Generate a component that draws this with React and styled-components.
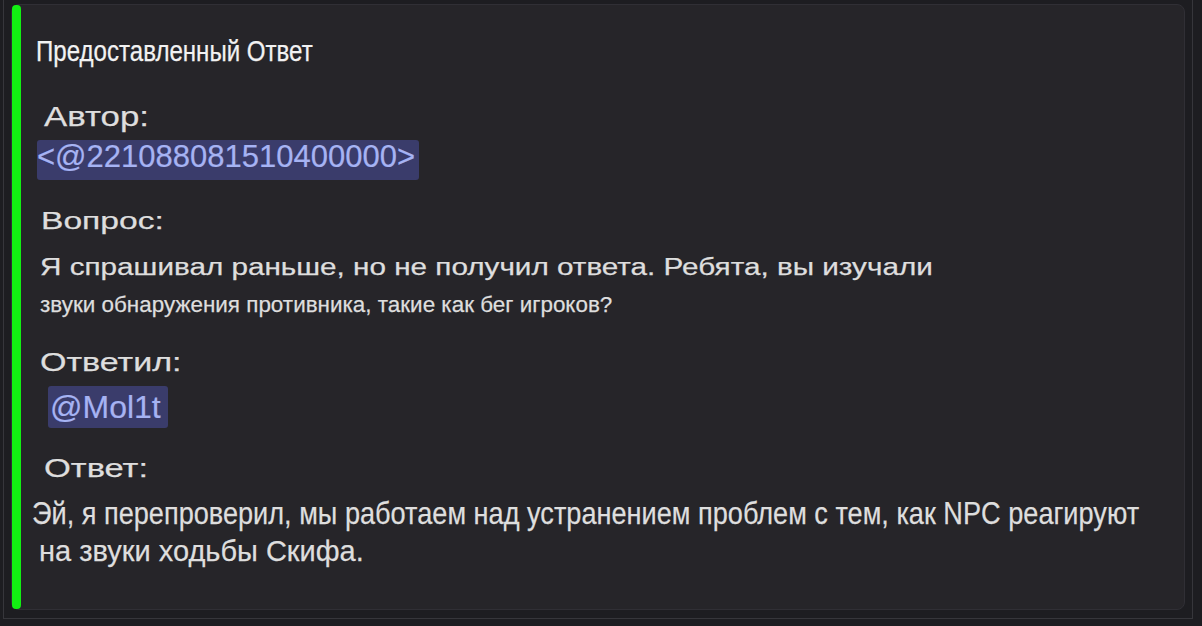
import React from "react";
import styled, { createGlobalStyle } from "styled-components";

const Global = createGlobalStyle`
  * { box-sizing: border-box; }
  html, body { margin: 0; padding: 0; background: #1d1d21; }
  body { font-family: "Liberation Sans", Arial, sans-serif; }
`;

const Page = styled.div`
  width: 1202px;
  height: 626px;
  padding: 0 9px 7px 3px;
  background: #1d1d21;
  overflow: hidden;
`;

const Frame = styled.div`
  height: 100%;
  border: 1px solid #36363b;
  border-top: 0;
  padding: 4px 7px 8px 7px;
`;

const Card = styled.div`
  display: flex;
  height: 606px;
  background: #262529;
  border: 1px solid #302f35;
  border-radius: 8px;
`;

const GreenBar = styled.div`
  flex: 0 0 9px;
  background: #12f012;
  border-radius: 4px;
`;

const Content = styled.div`
  flex: 1;
  padding-top: 29px;
  color: #dedede;
`;

const Line = styled.div`
  font-size: ${(p) => p.$size}px;
  line-height: ${(p) => p.$lh}px;
  height: ${(p) => p.$lh}px;
  margin-top: ${(p) => p.$mt || 0}px;
  margin-left: ${(p) => p.$indent}px;
  color: ${(p) => p.$color || "#dedede"};
  white-space: nowrap;
  -webkit-text-stroke: 0.25px currentColor;
  transform: scaleX(${(p) => p.$scale || 1});
  transform-origin: left center;
`;

const MentionRow = styled.div`
  margin-top: ${(p) => p.$mt}px;
  margin-left: ${(p) => p.$indent}px;
  height: ${(p) => p.$h}px;
`;

const Mention = styled.span`
  display: inline-block;
  font-size: ${(p) => p.$size}px;
  line-height: ${(p) => p.$lh}px;
  padding: ${(p) => p.$pad};
  color: #a6b3f3;
  background: #3a3c6b;
  border-radius: 3px;
  white-space: nowrap;
  -webkit-text-stroke: 0.2px currentColor;
`;

export default function App() {
  return (
    <>
      <Global />
      <Page>
        <Frame>
          <Card>
            <GreenBar />
            <Content>
              <Line $size={29} $lh={34} $indent={15} $scale={0.83} $color="#f2f2f2">
                Предоставленный Ответ
              </Line>
              <Line $size={27} $lh={32} $mt={33} $indent={23} $scale={1.29}>
                Автор:
              </Line>
              <MentionRow $mt={7} $indent={16} $h={40}>
                <Mention $size={31} $lh={34} $pad="0 4px 6px 0">
                  {"<@221088081510400000>"}
                </Mention>
              </MentionRow>
              <Line $size={24} $lh={29} $mt={26} $indent={20} $scale={1.4}>
                Вопрос:
              </Line>
              <Line $size={23} $lh={28} $mt={18} $indent={19} $scale={1.29}>
                Я спрашивал раньше, но не получил ответа. Ребята, вы изучали
              </Line>
              <Line $size={22} $lh={26} $mt={11} $indent={19} $scale={1.02}>
                звуки обнаружения противника, такие как бег игроков?
              </Line>
              <Line $size={26} $lh={31} $mt={29} $indent={19} $scale={1.31}>
                Ответил:
              </Line>
              <MentionRow $mt={8} $indent={27} $h={42}>
                <Mention $size={32} $lh={36} $pad="3px 7px 3px 2px">
                  @Mol1t
                </Mention>
              </MentionRow>
              <Line $size={25} $lh={30} $mt={25} $indent={23} $scale={1.38}>
                Ответ:
              </Line>
              <Line $size={32} $lh={37} $mt={12} $indent={11} $scale={0.848}>
                Эй, я перепроверил, мы работаем над устранением проблем с тем, как NPC реагируют
              </Line>
              <Line $size={29} $lh={34} $mt={2} $indent={18} $scale={1.0}>
                на звуки ходьбы Скифа.
              </Line>
            </Content>
          </Card>
        </Frame>
      </Page>
    </>
  );
}
